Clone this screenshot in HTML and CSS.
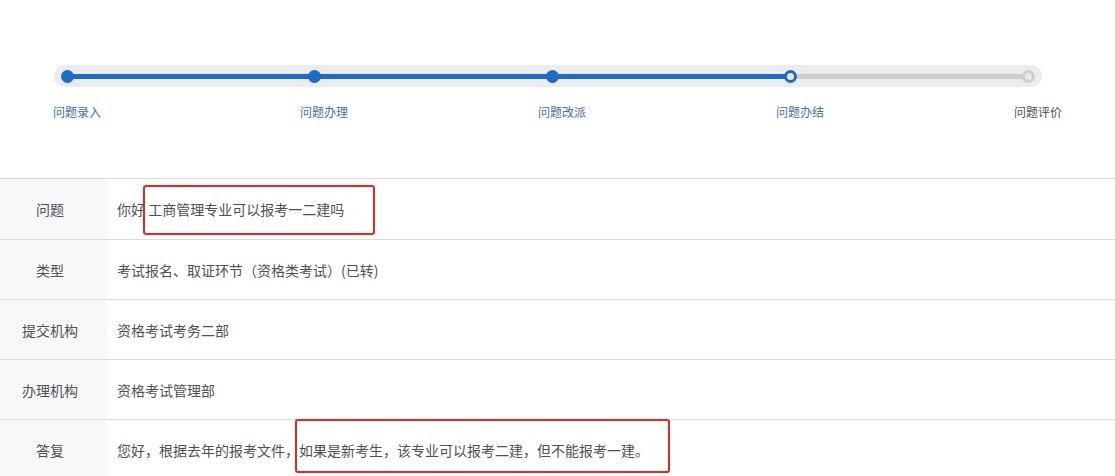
FILE: index.html
```html
<!DOCTYPE html>
<html lang="zh-CN">
<head>
<meta charset="utf-8">
<title>问题详情</title>
<link rel="stylesheet" href="styles.css">
</head>
<body>
<div class="page">
  <section class="steps">
    <div class="track">
      <span class="dot done"></span>
      <span class="seg seg-first done"></span>
      <span class="dot done"></span>
      <span class="seg done"></span>
      <span class="dot done"></span>
      <span class="seg done"></span>
      <span class="dot current"></span>
      <span class="seg todo"></span>
      <span class="dot todo"></span>
    </div>
    <div class="labels">
      <span class="label active">问题录入</span>
      <span class="label active">问题办理</span>
      <span class="label active">问题改派</span>
      <span class="label active">问题办结</span>
      <span class="label">问题评价</span>
    </div>
  </section>

  <section class="detail">
    <div class="row">
      <div class="key">问题</div>
      <div class="val"><span class="mark-wrap">你好 工商管理专业可以报考一二建吗<span class="mark mark-q"></span></span></div>
    </div>
    <div class="row">
      <div class="key">类型</div>
      <div class="val">考试报名、取证环节（资格类考试）(已转)</div>
    </div>
    <div class="row">
      <div class="key">提交机构</div>
      <div class="val">资格考试考务二部</div>
    </div>
    <div class="row">
      <div class="key">办理机构</div>
      <div class="val">资格考试管理部</div>
    </div>
    <div class="row">
      <div class="key">答复</div>
      <div class="val"><span class="mark-wrap">您好，根据去年的报考文件，如果是新考生，该专业可以报考二建，但不能报考一建。<span class="mark mark-a"></span></span></div>
    </div>
  </section>
</div>
</body>
</html>
```

FILE: styles.css
```css
html, body {
  margin: 0;
  padding: 0;
  background: #ffffff;
}

body {
  font-family: "Microsoft YaHei", "Noto Sans CJK SC", "Noto Sans", sans-serif;
  color: #505050;
  overflow: hidden;
}

.page {
  width: 1115px;
}

.steps {
  padding-top: 65px;
  height: 178px;
  box-sizing: border-box;
}

.track {
  margin-left: 54px;
  width: 988px;
  height: 22px;
  border-radius: 11px;
  background: #ececec;
  display: flex;
  align-items: center;
  padding-left: 7px;
  box-sizing: border-box;
}

.dot {
  flex: none;
  width: 13px;
  height: 13px;
  border-radius: 50%;
  box-sizing: border-box;
  position: relative;
  z-index: 1;
}

.dot.done {
  background: #1a6cc6;
}

.dot.current {
  background: #e6e8ec;
  border: 3px solid #1a6cc6;
}

.dot.todo {
  background: #e9e9e9;
  border: 3px solid #cfcfcf;
}

.seg {
  flex: none;
  width: 227px;
  height: 5px;
  margin: 0 -1px;
}

.seg-first {
  width: 236px;
}

.seg.done {
  background: #1a6cc6;
}

.seg.todo {
  background: #cdcdcd;
}

.labels {
  display: grid;
  grid-template-columns: 247px 238px 238px 238px auto;
  padding-left: 53px;
  margin-top: 17px;
  font-size: 12px;
  line-height: 16px;
}

.label {
  color: #505050;
  white-space: nowrap;
}

.label.active {
  color: #3b72b2;
}

.detail {
  border-top: 1px solid #dcdcdc;
}

.row {
  display: flex;
  height: 59px;
  border-bottom: 1px solid #dcdcdc;
  font-size: 14px;
}

.row:first-child {
  height: 60px;
}

.key {
  flex: none;
  width: 107px;
  padding-right: 7px;
  box-sizing: border-box;
  background: #f7f8fa;
  display: flex;
  align-items: center;
  justify-content: center;
  color: #505050;
}

.val {
  flex: 1;
  padding-left: 10px;
  display: flex;
  align-items: center;
  color: #505050;
  white-space: nowrap;
}

.mark-wrap {
  position: relative;
  line-height: 20px;
}

.mark {
  position: absolute;
  border: 2px solid #e8261f;
  border-radius: 3px;
  box-sizing: border-box;
  pointer-events: none;
}

.mark-q {
  left: 26px;
  top: -14px;
  width: 232px;
  height: 50px;
}

.mark-a {
  left: 178px;
  top: -21px;
  width: 375px;
  height: 54px;
}
```
